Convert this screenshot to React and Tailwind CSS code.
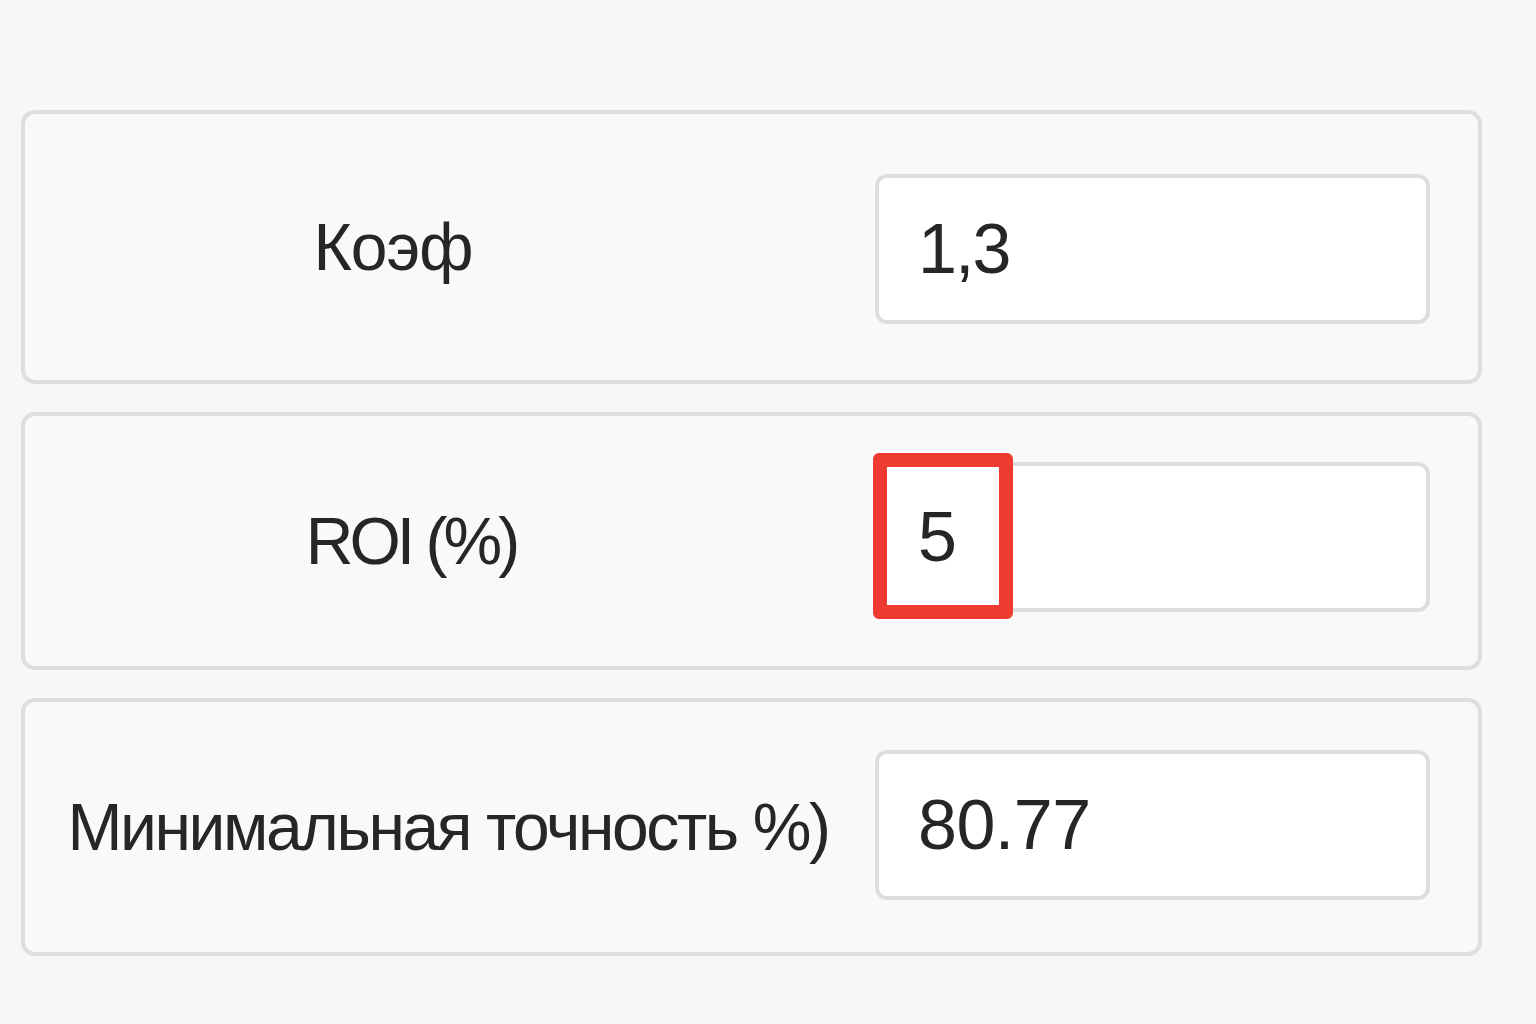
import React from 'react';

const ROWS = [
    { key: 'coef', label: 'Коэф', value: '1,3', h: 'h-[274px]', labelPad: 'pr-[114px]', track: 'tracking-[-1px]', inputMt: 'mt-[4px]', valTrack: 'tracking-[-2px]' },
    { key: 'roi', label: 'ROI (%)', value: '5', h: 'h-[258px]', labelPad: 'pr-[78px]', track: 'tracking-[-4px]', inputMt: 'mt-[-8px]', valTrack: '', marked: true },
    { key: 'acc', label: 'Минимальная точность %)', value: '80.77', h: 'h-[258px]', labelPad: 'pr-[4px]', track: 'tracking-[-2.4px]', inputMt: 'mt-[-4px]', valTrack: 'tracking-[-0.5px]' },
];

export default function App() {
    return (
        <div className="min-h-screen bg-[#f7f7f7] pt-[110px] pl-[21px]" style={{ fontFamily: '"Liberation Sans", Arial, sans-serif' }}>
            <div className="flex flex-col gap-[28px]">
                {ROWS.map((row) => (
                    <div
                        key={row.key}
                        className={`w-[1461px] ${row.h} border-4 border-[#dedede] rounded-[14px] bg-[#f9f9f9] flex items-center`}
                    >
                        <div className={`w-[850px] flex justify-center ${row.labelPad}`}>
                            <span className={`text-[66px] leading-none text-[#262626] whitespace-nowrap ${row.track}`}>
                                {row.label}
                            </span>
                        </div>
                        <div className={`relative w-[555px] h-[150px] ${row.inputMt} border-4 border-[#dedede] rounded-[12px] bg-white flex items-center pl-[39px]`}>
                            <span className={`text-[70px] leading-none text-[#262626] ${row.valTrack}`}>{row.value}</span>
                            {row.marked && (
                                <div className="absolute left-[-6px] top-[-13px] w-[140px] h-[166px] border-[14px] border-[#ee3b32] rounded-[6px]" />
                            )}
                        </div>
                    </div>
                ))}
            </div>
        </div>
    );
}
